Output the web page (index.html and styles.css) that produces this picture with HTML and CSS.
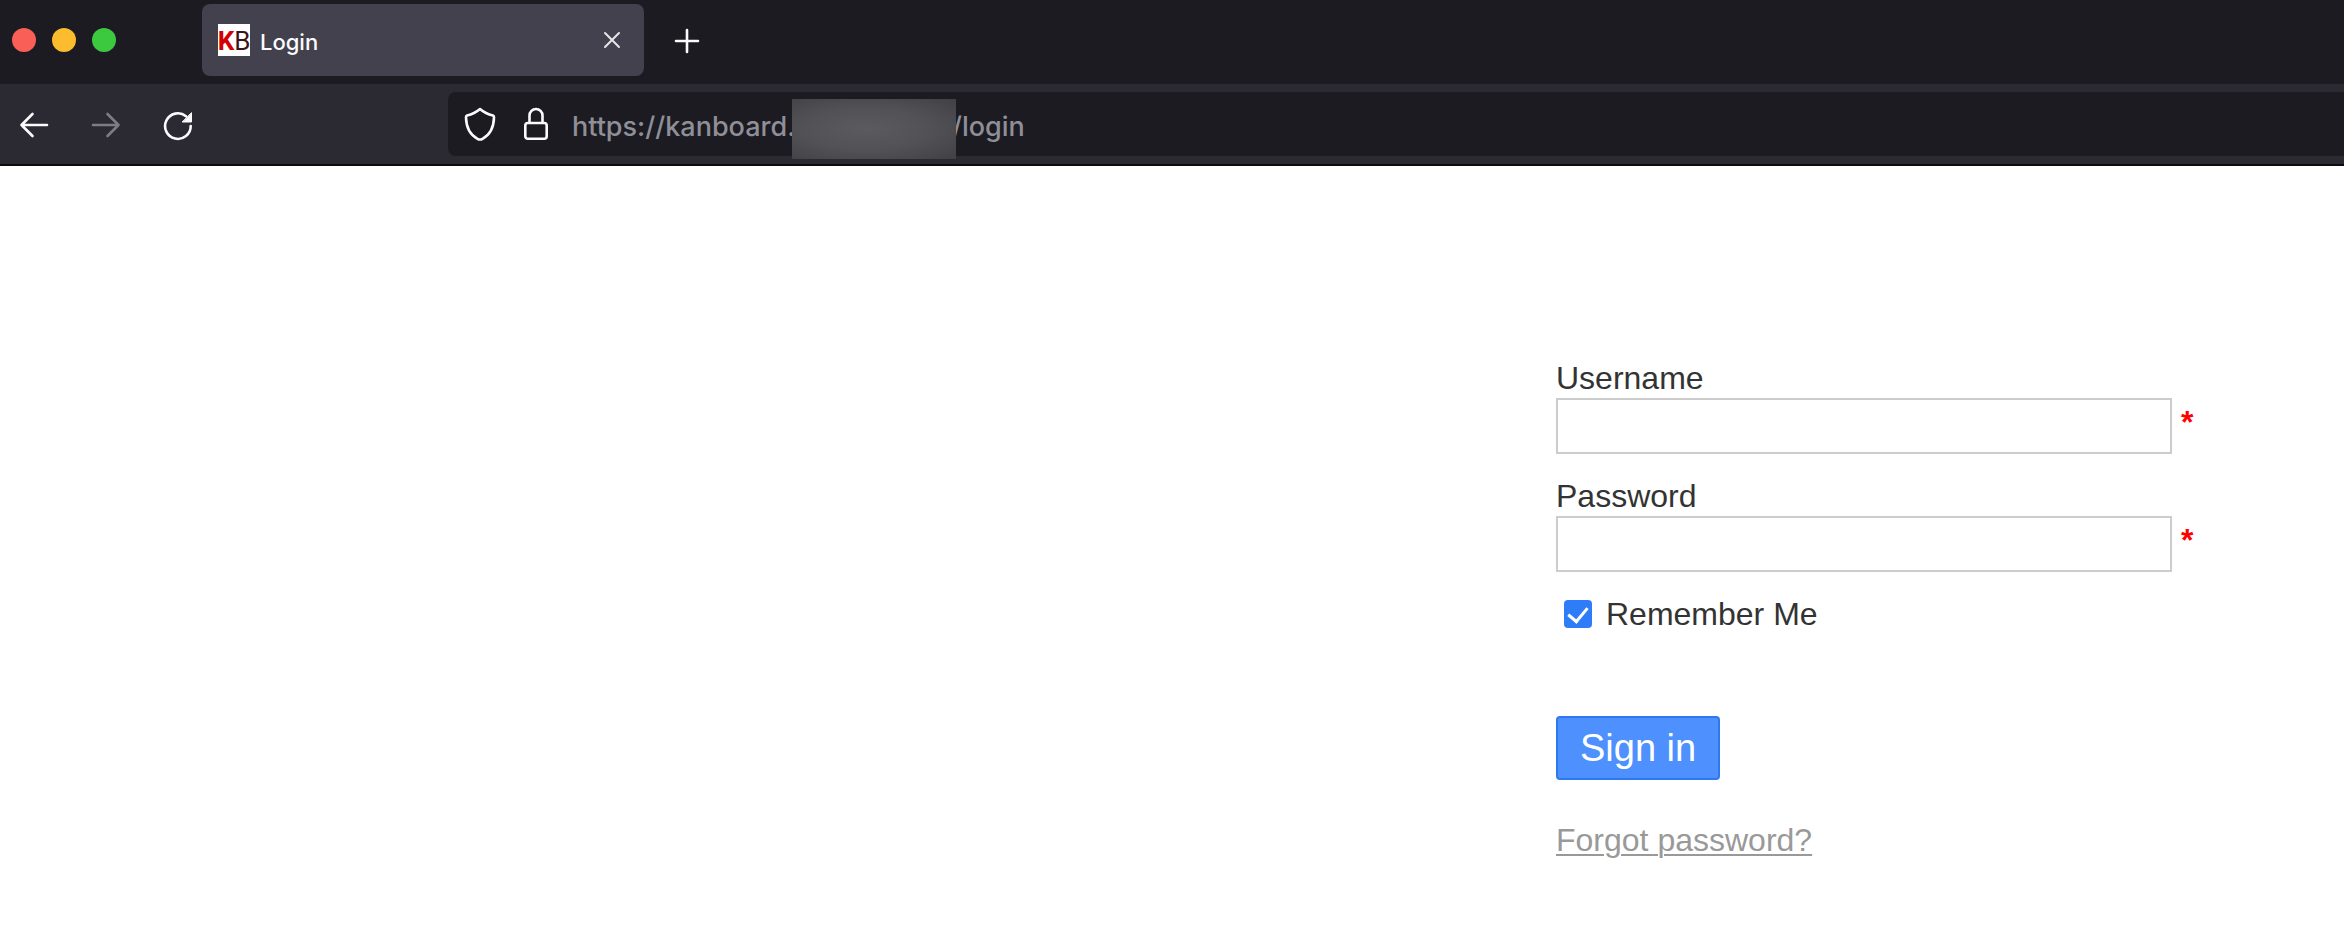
FILE: index.html
```html
<!DOCTYPE html>
<html lang="en">
<head>
<meta charset="utf-8">
<title>Login</title>
<link rel="stylesheet" href="styles.css">
</head>
<body>
<header class="browser">
  <div class="tabbar">
    <div class="lights"><span class="light red"></span><span class="light yellow"></span><span class="light green"></span></div>
    <div class="tab">
      <span class="favicon"><b class="fav-k">K</b><span class="fav-b">B</span></span>
      <span class="tab-title">Login</span>
      <button class="icon-btn" type="button" aria-label="Close tab">
        <svg width="20" height="20" viewBox="0 0 20 20" fill="none" stroke="#e6e6ea" stroke-width="2" stroke-linecap="round"><path d="M3 3 17 17M17 3 3 17"/></svg>
      </button>
    </div>
    <button class="icon-btn new-tab" type="button" aria-label="New tab">
      <svg width="28" height="28" viewBox="0 0 28 28" fill="none" stroke="#fbfbfe" stroke-width="2.6" stroke-linecap="round"><path d="M14 3V25M3 14H25"/></svg>
    </button>
  </div>
  <div class="toolbar">
    <nav class="nav">
      <button class="icon-btn" type="button" aria-label="Back">
        <svg width="32" height="32" viewBox="0 0 32 32" fill="none" stroke="#fbfbfe" stroke-width="2.6" stroke-linecap="round" stroke-linejoin="round"><path d="M29 15H3.500M14.500 4 3.500 15 14.500 26"/></svg>
      </button>
      <button class="icon-btn" type="button" aria-label="Forward" disabled>
        <svg width="32" height="32" viewBox="0 0 32 32" fill="none" stroke="#7d7c85" stroke-width="2.600" stroke-linecap="round" stroke-linejoin="round"><path d="M3 15H28.500M17.500 4 28.500 15 17.500 26"/></svg>
      </button>
      <button class="icon-btn" type="button" aria-label="Reload">
        <svg width="32" height="32" viewBox="0 0 32 32" fill="none" stroke="#fbfbfe" stroke-width="2.600" stroke-linecap="round"><path d="M28.700 16A12.800 12.800 0 1 1 24 6.200"/><path d="M29.500 3V12H20.500Z" fill="#fbfbfe" stroke-width="1" stroke-linejoin="round"/></svg>
      </button>
    </nav>
    <div class="urlbar">
      <svg class="shield" width="32" height="36" viewBox="0 0 32 36" fill="none" stroke="#fbfbfe" stroke-width="2.600" stroke-linejoin="round"><path d="M16 3C12 6.500 7.500 8.500 3 9.500Q1.900 9.900 2 11.500C2.200 20.500 5.500 28.500 13.500 32.800Q16 34.300 18.500 32.800C26.500 28.500 29.800 20.500 30 11.500Q30.100 9.900 29 9.500C24.500 8.500 20 6.500 16 3Z"/></svg>
      <svg class="lock" width="28" height="36" viewBox="0 0 28 36" fill="none" stroke="#fbfbfe" stroke-width="2.600"><rect x="3.300" y="17" width="21.400" height="15.700" rx="2.500"/><path d="M7.500 17V9.500A6.500 6.500 0 0 1 20.500 9.500V17"/></svg>
      <input class="url" type="text" aria-label="Address" value="https://kanboard.">
      <span class="redacted"></span>
      <span class="path">/login</span>
    </div>
  </div>
</header>
<main class="page">
  <form class="login">
    <label class="caption" for="username">Username</label>
    <div class="field"><input id="username" type="text" required><span class="required">*</span></div>
    <label class="caption" for="password">Password</label>
    <div class="field"><input id="password" type="password" required><span class="required">*</span></div>
    <label class="remember"><input type="checkbox" checked>Remember Me</label>
    <button class="submit" type="submit">Sign in</button>
    <a class="forgot" href="#forgot">Forgot password?</a>
  </form>
</main>
</body>
</html>
```
FILE: styles.css
```css
* { box-sizing: border-box; }

body {
  margin: 0;
  background: #fff;
  color: #333;
  font-family: "Liberation Sans", Arial, sans-serif;
  font-size: 32px;
}

svg { display: block; flex: none; }

.icon-btn {
  display: block;
  padding: 0;
  border: 0;
  background: none;
}

.browser {
  background: #2b2a33;
  border-bottom: 2px solid #0c0c0d;
  font-family: Inter, sans-serif;
}

.tabbar {
  display: flex;
  align-items: center;
  height: 84px;
  padding: 0 12px 4px;
  background: #1c1b22;
}

.lights {
  display: flex;
  gap: 16px;
  width: 190px;
}

.light {
  width: 24px;
  height: 24px;
  border-radius: 50%;
}

.red { background: #f95f57; }
.yellow { background: #fbbc2e; }
.green { background: #3dc93f; }

.tab {
  display: flex;
  align-items: center;
  width: 442px;
  height: 72px;
  padding: 0 22px 0 16px;
  border-radius: 8px;
  background: #42414d;
  color: #fbfbfe;
}

.favicon {
  display: flex;
  justify-content: center;
  width: 32px;
  height: 32px;
  background: #fff;
  font-family: Roboto, sans-serif;
  font-size: 26px;
  line-height: 34px;
}

.fav-k { color: #d40000; }
.fav-b { color: #3c1414; }

.tab-title {
  flex: 1;
  margin: 4px 0 0 10px;
  font-size: 22px;
  font-weight: 500;
}

.new-tab { margin: 2px 0 0 29px; }

.toolbar {
  display: flex;
  align-items: center;
  height: 80px;
}

.nav {
  display: flex;
  gap: 40px;
  width: 448px;
  padding: 4px 18px 0;
}

.urlbar {
  display: flex;
  flex: 1;
  align-items: center;
  height: 64px;
  padding-left: 16px;
  border-radius: 8px 0 0 8px;
  background: #1c1b22;
  color: #8f8f98;
  font-size: 27px;
  font-weight: 500;
}

.lock { margin: 0 22px 0 26px; }

.url {
  width: 220px;
  padding: 4px 0 0;
  border: 0;
  outline: 0;
  background: none;
  color: inherit;
  font: inherit;
}

.redacted {
  z-index: 1;
  width: 164px;
  height: 60px;
  margin-top: 10px;
  background: radial-gradient(ellipse at 45% 50%, #5b5a5f, #525156 50%, #414045);
}

.path {
  margin-left: -4px;
  padding-top: 4px;
}

.page {
  display: grid;
  grid-template-columns: 389fr 197fr;
  padding: 194px 0 80px;
}

.login {
  display: flex;
  flex-direction: column;
  grid-column: 2;
  align-items: flex-start;
  line-height: 36px;
}

.caption { margin-bottom: 2px; }

.field {
  display: flex;
  gap: 9px;
  margin-bottom: 24px;
}

.field input {
  width: 616px;
  height: 56px;
  padding: 0 6px;
  border: 2px solid #ccc;
  font: inherit;
}

.required {
  padding-top: 6px;
  color: #f00;
  font-weight: bold;
}

.remember {
  display: flex;
  align-items: center;
}

.remember input {
  display: grid;
  place-items: center;
  width: 28px;
  height: 28px;
  margin: 0 14px 0 8px;
  border-radius: 4px;
  background: #2f7cf9;
  appearance: none;
}

.remember input:checked::before {
  width: 9px;
  height: 16px;
  margin-bottom: 4px;
  border: solid #fff;
  border-width: 0 3px 3px 0;
  content: "";
  rotate: 40deg;
}

.submit {
  height: 64px;
  margin: 84px 0 42px;
  padding: 0 22px;
  border: 2px solid #3079ed;
  border-radius: 4px;
  background: #4d90fe;
  color: #fff;
  font-family: inherit;
  font-size: 38px;
}

.forgot {
  color: #999;
  text-decoration-thickness: 2px;
  text-underline-offset: 3px;
}
```
